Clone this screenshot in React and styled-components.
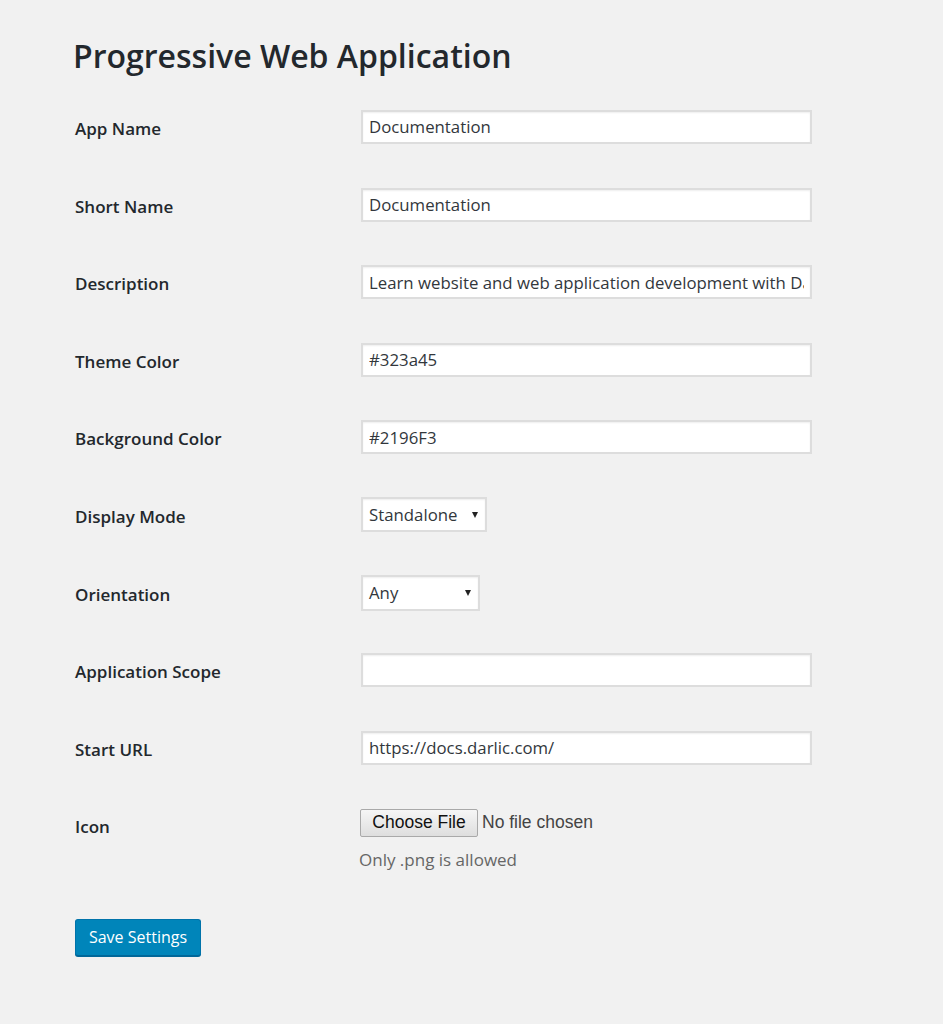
import styled, { createGlobalStyle } from "styled-components";

const GlobalStyle = createGlobalStyle`
  body {
    margin: 0;
    background: #f1f1f1;
    font-family: "Open Sans", "Noto Sans", sans-serif;
    color: #23282d;
  }
`;

const Wrap = styled.div`
  padding: 33px 0 60px 75px;
`;

const Title = styled.h1`
  margin: 0 0 0 -2px;
  font-size: 32px;
  font-weight: 600;
  line-height: 46px;
  color: #23282d;
`;

const Form = styled.div`
  margin-top: 9.2px;
`;

const Row = styled.div`
  box-sizing: border-box;
  display: grid;
  grid-template-columns: 286px 1fr;
  align-items: center;
  height: 77.6px;
`;

const IconRow = styled.div`
  display: grid;
  grid-template-columns: 286px 1fr;
  align-items: start;
  padding-top: 22.4px;
`;

const Label = styled.label`
  font-size: 17px;
  font-weight: 600;
  color: #23282d;
  padding-top: ${(p) => (p.$top ? "6px" : "3px")};
`;

const Input = styled.input`
  box-sizing: border-box;
  width: 451px;
  height: 34px;
  padding: 0 6px;
  border: 2px solid #dddddd;
  box-shadow: inset 0 1px 2px rgba(0, 0, 0, 0.07);
  background: #fff;
  font-family: "Open Sans", "Noto Sans", sans-serif;
  font-size: 16.8px;
  color: #32373c;
  outline: none;
`;

const SelectBox = styled.div`
  position: relative;
  box-sizing: border-box;
  width: ${(p) => p.$w}px;
  height: ${(p) => p.$h}px;
  border: 2px solid #dddddd;
  background: #fff;
  box-shadow: inset 0 1px 2px rgba(0, 0, 0, 0.07);
  display: flex;
  align-items: center;
  padding-left: 6px;
  font-size: 16.8px;
  color: #32373c;
`;

const Arrow = styled.span`
  position: absolute;
  right: 7px;
  top: 13px;
  width: 0;
  height: 0;
  border-left: 3.5px solid transparent;
  border-right: 3.5px solid transparent;
  border-top: 6px solid #222;
`;

const FileLine = styled.div`
  display: flex;
  align-items: center;
  gap: 4px;
  margin-left: -1px;
`;

const FileButton = styled.button`
  box-sizing: border-box;
  width: 118px;
  height: 28px;
  padding: 0;
  border: 1px solid #a9a9a9;
  border-radius: 2px;
  background: linear-gradient(#f6f6f6, #dedede);
  font-family: "Liberation Sans", Arial, sans-serif;
  font-size: 17.5px;
  color: #111;
`;

const FileStatus = styled.span`
  font-family: "Liberation Sans", Arial, sans-serif;
  font-size: 17.5px;
  color: #444;
`;

const Help = styled.p`
  margin: 11px 0 0 -2px;
  font-size: 17px;
  color: #666;
`;

const SaveButton = styled.button`
  margin-top: 48px;
  box-sizing: border-box;
  width: 126px;
  height: 37px;
  border: 1px solid #0073aa;
  border-bottom-color: #006799;
  border-radius: 3px;
  background: #0085ba;
  box-shadow: 0 1px 0 #006799;
  color: #fff;
  font-family: "Open Sans", "Noto Sans", sans-serif;
  font-size: 16px;
`;

const textFields = [
  ["App Name", "Documentation"],
  ["Short Name", "Documentation"],
  ["Description", "Learn website and web application development with Darlic"],
  ["Theme Color", "#323a45"],
  ["Background Color", "#2196F3"],
];

const App = () => (
  <Wrap>
    <GlobalStyle />
    <Title>Progressive Web Application</Title>
    <Form>
      {textFields.map(([label, value]) => (
        <Row key={label}>
          <Label>{label}</Label>
          <Input defaultValue={value} />
        </Row>
      ))}
      <Row>
        <Label>Display Mode</Label>
        <SelectBox $w={126} $h={35}>
          Standalone
          <Arrow />
        </SelectBox>
      </Row>
      <Row>
        <Label>Orientation</Label>
        <SelectBox $w={119} $h={36}>
          Any
          <Arrow />
        </SelectBox>
      </Row>
      <Row>
        <Label>Application Scope</Label>
        <Input defaultValue="" />
      </Row>
      <Row>
        <Label>Start URL</Label>
        <Input defaultValue="https://docs.darlic.com/" />
      </Row>
      <IconRow>
        <Label $top>Icon</Label>
        <div>
          <FileLine>
            <FileButton>Choose File</FileButton>
            <FileStatus>No file chosen</FileStatus>
          </FileLine>
          <Help>Only .png is allowed</Help>
        </div>
      </IconRow>
    </Form>
    <SaveButton>Save Settings</SaveButton>
  </Wrap>
);

export default App;
